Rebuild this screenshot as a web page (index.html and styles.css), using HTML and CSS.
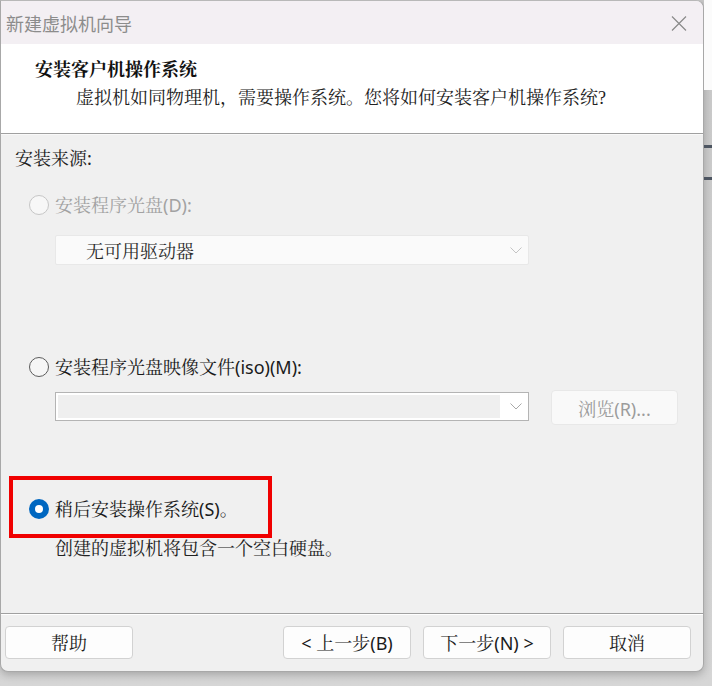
FILE: index.html
```html
<!DOCTYPE html>
<html lang="zh-CN">
<head>
<meta charset="utf-8">
<title>新建虚拟机向导</title>
<link rel="stylesheet" href="styles.css">
</head>
<body>
<div class="screen">
  <div class="dialog">
    <div class="titlebar">
      <span class="title">新建虚拟机向导</span>
      <svg class="close" width="16" height="15" viewBox="0 0 16 15"><path d="M1 0.5 L15 14.5 M15 0.5 L1 14.5" stroke="#8a8a8a" stroke-width="1.2" fill="none"/></svg>
    </div>
    <div class="header">
      <div class="h-title">安装客户机操作系统</div>
      <div class="h-sub">虚拟机如同物理机，需要操作系统。您将如何安装客户机操作系统?</div>
    </div>
    <div class="content">
      <div class="group-label">安装来源:</div>
      <div class="radio-row disabled r1"><span class="radio"></span><span>安装程序光盘(D):</span></div>
      <div class="select">
        <span>无可用驱动器</span>
        <svg class="chev" width="12" height="7" viewBox="0 0 12 7"><path d="M0.5 0.5 L6 6 L11.5 0.5" stroke="#c4c4c4" stroke-width="1" fill="none"/></svg>
      </div>
      <div class="radio-row r2"><span class="radio"></span><span>安装程序光盘映像文件(iso)(M):</span></div>
      <div class="iso-row">
        <div class="combo">
          <div class="combo-edit"></div>
          <div class="combo-btn"><svg class="chev" width="12" height="7" viewBox="0 0 12 7"><path d="M0.5 0.5 L6 6 L11.5 0.5" stroke="#a8a8a8" stroke-width="1" fill="none"/></svg></div>
        </div>
        <div class="browse">浏览(R)...</div>
      </div>
      <div class="highlight">
        <div class="radio-row"><span class="radio checked"></span><span>稍后安装操作系统(S)。</span></div>
      </div>
      <div class="desc">创建的虚拟机将包含一个空白硬盘。</div>
    </div>
    <div class="footer">
      <button class="btn">帮助</button>
      <div class="nav">
        <button class="btn">&lt; 上一步(B)</button>
        <button class="btn">下一步(N) &gt;</button>
        <button class="btn">取消</button>
      </div>
    </div>
  </div>
  <div class="side">
    <div class="side-top"></div>
    <div class="side-bar b1"></div>
    <div class="side-bar b2"></div>
  </div>
</div>
</body>
</html>
```
FILE: styles.css
```css
* { box-sizing: border-box; }
html, body { margin: 0; padding: 0; }
body {
  width: 712px;
  height: 686px;
  overflow: hidden;
  background: #cfcfcf;
  font-family: "Noto Sans", "Noto Serif CJK SC", "Noto Sans CJK SC", sans-serif;
  font-size: 18px;
  color: #1a1a1a;
}
.screen {
  display: flex;
  height: 686px;
  background: linear-gradient(#c9c9c9, #d6d6d6);
}
.dialog {
  flex: none;
  width: 704px;
  height: 672px;
  border: 1px solid #a8a8a8;
  border-top-color: #b8b8b8;
  border-radius: 0 8px 8px 8px;
  overflow: hidden;
  display: flex;
  flex-direction: column;
  background: #f0f0f0;
  box-shadow: 0 3px 8px rgba(0,0,0,0.22);
}
.titlebar {
  height: 43px;
  flex: none;
  background: #f3eff3;
  display: flex;
  align-items: center;
  justify-content: space-between;
  padding: 0 16px 0 5px;
}
.title {
  font-family: "Noto Sans CJK SC", sans-serif;
  font-size: 18px;
  color: #8c8c8c;
  line-height: 24px;
}
.close { display: block; margin-top: 1px; }
.header {
  flex: none;
  height: 90px;
  background: #fff;
  border-bottom: 1px solid #a0a0a0;
  padding: 12px 0 0 34px;
  font-family: "Liberation Serif", "Noto Serif CJK SC", "Noto Sans CJK SC", serif;
  color: #111;
}
.h-title {
  font-weight: 700;
  line-height: 24px;
  font-family: "Noto Serif CJK SC", "Noto Sans CJK SC", serif;
}
.h-sub {
  margin: 6px 0 0 41px;
  line-height: 24px;
  color: #222;
}
.content {
  flex: 1;
  border-top: 1px solid #f9f9f9;
  padding: 11px 0 0 14px;
  display: flex;
  flex-direction: column;
  align-items: flex-start;
}
.group-label { line-height: 24px; color: #222; }
.radio-row {
  display: flex;
  align-items: center;
  gap: 6px;
  height: 24px;
  line-height: 24px;
  color: #1a1a1a;
}
.r1 { margin: 23px 0 0 14px; }
.r2 { margin: 90px 0 0 14px; }
.radio {
  flex: none;
  width: 20px;
  height: 20px;
  border-radius: 50%;
  border: 1px solid #5c5c5c;
  background: #f6f6f6;
  position: relative;
}
.disabled { color: #a2a2a2; }
.disabled .radio { border-color: #c6c6c6; background: #f7f7f7; }
.radio.checked { border: none; background: #0067c0; }
.radio.checked::after {
  content: "";
  position: absolute;
  left: 6px;
  top: 6px;
  width: 8px;
  height: 8px;
  border-radius: 50%;
  background: #fff;
}
.select {
  margin: 18px 0 0 40px;
  width: 474px;
  height: 30px;
  background: #fafafa;
  border: 1px solid #e8e8e8;
  border-radius: 2px;
  display: flex;
  align-items: center;
  justify-content: space-between;
  padding: 0 6px 0 30px;
  color: #2a2a2a;
}
.chev { display: block; }
.iso-row {
  margin: 11px 0 0 40px;
  display: flex;
  align-items: flex-start;
}
.combo {
  margin-top: 2px;
  width: 474px;
  height: 29px;
  border: 1px solid #b4b4b4;
  background: #fff;
  padding: 2px 0 2px 2px;
  display: flex;
}
.combo-edit { flex: 1; background: #efefef; }
.combo-btn {
  width: 28px;
  display: flex;
  align-items: center;
  justify-content: center;
  padding-left: 3px;
}
.browse {
  margin-left: 22px;
  width: 127px;
  height: 35px;
  background: #f9f9f9;
  border: 1px solid #e8e8e8;
  border-radius: 4px;
  display: flex;
  align-items: center;
  justify-content: center;
  color: #9c9c9c;
}
.highlight {
  margin: 51px 0 0 -6px;
  width: 263px;
  height: 62px;
  border: 4px solid #f00000;
  padding: 17px 0 0 16px;
}
.desc {
  margin: -2px 0 0 40px;
  line-height: 24px;
  color: #222;
}
.footer {
  flex: none;
  height: 58px;
  border-top: 1px solid #a0a0a0;
  box-shadow: inset 0 1px 0 #fff;
  padding: 12px 12px 12px 4px;
  display: flex;
  justify-content: space-between;
}
.nav { display: flex; gap: 12px; }
.btn {
  width: 128px;
  height: 33px;
  background: #fdfdfd;
  border: 1px solid #d2d2d2;
  border-radius: 4px;
  font: inherit;
  color: #1b1b1b;
  padding: 0;
  line-height: 24px;
}
.side {
  flex: 1;
  display: flex;
  flex-direction: column;
}
.side-top { height: 90px; background: #fbfbfb; }
.side-bar { height: 3px; background: #4d5561; }
.b1 { margin-top: 55px; }
.b2 { margin-top: 29px; }
```
